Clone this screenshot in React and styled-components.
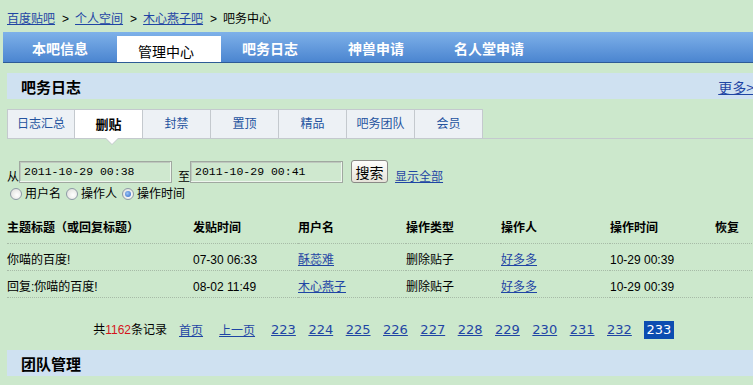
import React from 'react';
import styled, {createGlobalStyle, css} from 'styled-components';

const GlobalStyle = createGlobalStyle`
  html, body {
    margin: 0;
    padding: 0;
    background: #cce8cc;
    overflow: hidden;
  }
  body {
    font-family: "Liberation Sans", "Noto Sans CJK SC", sans-serif;
    font-size: 12px;
    color: #000;
  }
  a {
    color: #1f45a4;
    text-decoration: underline;
    cursor: pointer;
  }
`;

const navTabs = ['本吧信息', '管理中心', '吧务日志', '神兽申请', '名人堂申请'];
const subTabs = ['日志汇总', '删贴', '封禁', '置顶', '精品', '吧务团队', '会员'];
const columns = [
    {title: '主题标题（或回复标题）', width: 186},
    {title: '发贴时间', width: 105},
    {title: '用户名', width: 108},
    {title: '操作类型', width: 95},
    {title: '操作人', width: 109},
    {title: '操作时间', width: 105},
    {title: '恢复', width: 45},
];
const rows = [
    {title: '你喵的百度!', posted: '07-30 06:33', user: '酥蕊难', type: '删除贴子', operator: '好多多', time: '10-29 00:39'},
    {title: '回复:你喵的百度!', posted: '08-02 11:49', user: '木心燕子', type: '删除贴子', operator: '好多多', time: '10-29 00:39'},
];
const pages = [223, 224, 225, 226, 227, 228, 229, 230, 231, 232];

const App = () => {
    return (
        <Page>
            <GlobalStyle/>
            <Crumbs>
                <a>百度贴吧</a><Sep>&gt;</Sep>
                <a>个人空间</a><Sep>&gt;</Sep>
                <a>木心燕子吧</a><Sep>&gt;</Sep>
                <span>吧务中心</span>
            </Crumbs>

            <NavBar>
                {navTabs.map(tab => (
                    <NavTab key={tab} $active={tab === '管理中心'}>{tab}</NavTab>
                ))}
            </NavBar>

            <SectionHeader>
                <span>吧务日志</span>
                <More>更多&gt;</More>
            </SectionHeader>

            <SubTabs>
                {subTabs.map(tab => (
                    <SubTab key={tab} $active={tab === '删贴'}>{tab}</SubTab>
                ))}
            </SubTabs>

            <SearchRow>
                <Label>从</Label>
                <DateInput readOnly value="2011-10-29 00:38"/>
                <Label $gap={6}>至</Label>
                <DateInput readOnly value="2011-10-29 00:41"/>
                <SearchButton>搜索</SearchButton>
                <ShowAll>显示全部</ShowAll>
            </SearchRow>

            <Radios>
                <Option><Radio/>用户名</Option>
                <Option><Radio/>操作人</Option>
                <Option><Radio $checked/>操作时间</Option>
            </Radios>

            <LogTable>
                <colgroup>
                    {columns.map(col => <col key={col.title} style={{width: col.width}}/>)}
                </colgroup>
                <thead>
                <tr>
                    {columns.map(col => <th key={col.title}>{col.title}</th>)}
                </tr>
                </thead>
                <tbody>
                {rows.map(row => (
                    <tr key={row.title}>
                        <td>{row.title}</td>
                        <td>{row.posted}</td>
                        <td><a>{row.user}</a></td>
                        <td>{row.type}</td>
                        <td><a>{row.operator}</a></td>
                        <td>{row.time}</td>
                        <td></td>
                    </tr>
                ))}
                </tbody>
            </LogTable>

            <Pager>
                <Total>共<Count>1162</Count>条记录</Total>
                <PageLink $gap={12}>首页</PageLink>
                <PageLink $gap={16}>上一页</PageLink>
                {pages.map((num, i) => (
                    <PageNum key={num} $gap={i === 0 ? 16 : 12.5}>{num}</PageNum>
                ))}
                <CurrentPage>233</CurrentPage>
            </Pager>

            <SectionHeader $gap={11}>
                <span>团队管理</span>
            </SectionHeader>
        </Page>
    );
};

const Page = styled.div`
  width: 760px;
`;

const Crumbs = styled.div`
  padding: 12px 0 6px 7px;
  line-height: 14px;
  white-space: nowrap;
`;

const Sep = styled.span`
  margin: 0 6px 0 7px;
`;

const NavBar = styled.div`
  margin-left: 3px;
  height: 30px;
  padding-left: 4px;
  display: flex;
  align-items: flex-end;
  background: linear-gradient(#7eb1e9, #4b85d0);
  border-bottom: 1px solid #2d5b96;
`;

const NavTab = styled.div`
  height: 30px;
  line-height: 32px;
  padding: 0 25px;
  font-family: "Noto Sans CJK SC", sans-serif;
  font-size: 14px;
  font-weight: bold;
  color: #fff;
  white-space: nowrap;

  ${p => p.$active && css`
    height: 26px;
    line-height: 30px;
    margin: 0 -4px 0 4px;
    padding: 0 27px 0 21px;
    background: #fff;
    color: #000;
    font-weight: normal;
  `}
`;

const SectionHeader = styled.div`
  margin: ${p => p.$gap || 10}px 0 0 7px;
  height: 26px;
  padding: 0 6px 0 14px;
  display: flex;
  align-items: center;
  justify-content: space-between;
  background: #cfe1f1;
  font-family: "Noto Sans CJK SC", sans-serif;
  font-size: 15px;
  font-weight: bold;
`;

const More = styled.a`
  font-size: 14px;
  font-weight: normal;
  line-height: 16px;
  margin-top: 2px;
`;

const SubTabs = styled.div`
  margin: 10px 0 0 7px;
  display: flex;
  border-bottom: 1px solid #c4c9ce;
`;

const SubTab = styled.div`
  position: relative;
  box-sizing: border-box;
  width: 68px;
  height: 29px;
  line-height: 29px;
  text-align: center;
  background: #edf1f5;
  border-top: 1px solid #c4c9ce;
  border-right: 1px solid #c4c9ce;
  color: #24539f;

  &:first-child {
    border-left: 1px solid #c4c9ce;
  }

  ${p => p.$active && css`
    background: #fff;
    color: #000;
    font-size: 13px;
    font-weight: bold;

    &::before, &::after {
      content: "";
      position: absolute;
      left: 30px;
      top: 100%;
      border: 7px solid transparent;
      border-top-color: #c4c9ce;
      border-bottom: none;
    }

    &::after {
      left: 31px;
      border-width: 6px;
      border-bottom: none;
      border-top-color: #fff;
    }
  `}
`;

const SearchRow = styled.div`
  margin: 21px 0 0 7px;
  display: flex;
  align-items: flex-end;
  height: 23px;
`;

const Label = styled.span`
  margin-left: ${p => p.$gap || 0}px;
  font-family: "Noto Sans CJK SC", sans-serif;
  line-height: 14px;
`;

const DateInput = styled.input`
  box-sizing: border-box;
  width: 153px;
  height: 22px;
  margin: 0;
  padding: 0 0 1px 4px;
  border: 1px solid #a0a8a0;
  box-shadow: inset -1px -1px 0 #eef6ee, inset 1px 1px 0 #bfc8bf;
  background: #cfe8cf;
  font-family: "Liberation Mono", monospace;
  font-size: 11.5px;
  color: #000;
  outline: none;
`;

const SearchButton = styled.button`
  box-sizing: border-box;
  width: 37px;
  height: 23px;
  margin-left: 8px;
  padding: 0;
  border: 1px solid #8a8a86;
  border-radius: 3px;
  background: linear-gradient(#fdfdfb, #e6e3d9);
  font-family: "Noto Sans CJK SC", sans-serif;
  font-size: 14px;
  line-height: 20px;
  color: #000;
`;

const ShowAll = styled.a`
  margin-left: 7px;
  line-height: 14px;
  font-family: "Noto Sans CJK SC", sans-serif;
`;

const Radios = styled.div`
  margin: 4px 0 0 7px;
  height: 14px;
  display: flex;
  align-items: center;
  gap: 2px;
  line-height: 14px;
`;

const Option = styled.label`
  display: flex;
  align-items: center;
  gap: 3px;
  padding-left: 3px;
`;

const Radio = styled.span`
  position: relative;
  box-sizing: border-box;
  width: 12px;
  height: 12px;
  border: 1px solid #8e9aa6;
  border-radius: 50%;
  background: radial-gradient(circle at 60% 60%, #fff, #dcdcd8);

  ${p => p.$checked && css`
    &::after {
      content: "";
      position: absolute;
      left: 2px;
      top: 2px;
      width: 6px;
      height: 6px;
      border-radius: 50%;
      background: radial-gradient(circle at 40% 40%, #9cc4f5, #2b66c7);
    }
  `}
`;

const LogTable = styled.table`
  margin: 16px 0 0 7px;
  width: 753px;
  table-layout: fixed;
  border-collapse: collapse;
  font-size: 12px;

  th, td {
    padding: 0;
    text-align: left;
    line-height: 14px;
    white-space: nowrap;
    border-bottom: 1px dotted #a7bba7;
  }

  th {
    padding: 3px 0 9px;
    font-family: "Noto Sans CJK SC", sans-serif;
    font-weight: bold;
  }

  td {
    padding: 9px 0 3px;
  }
`;

const Pager = styled.div`
  margin: 23px 0 0 7px;
  height: 18px;
  display: flex;
  align-items: center;
  justify-content: center;
  line-height: 14px;
`;

const Total = styled.span`
  font-size: 12px;
`;

const Count = styled.span`
  color: #d4141b;
`;

const PageLink = styled.a`
  margin-left: ${p => p.$gap}px;
  font-family: "Noto Sans CJK SC", sans-serif;
  font-size: 12px;
`;

const PageNum = styled.a`
  margin-left: ${p => p.$gap}px;
  font-family: "DejaVu Sans", sans-serif;
  font-size: 13px;
`;

const CurrentPage = styled.span`
  margin-left: 12px;
  width: 30px;
  height: 18px;
  line-height: 18px;
  text-align: center;
  background: #0c4db1;
  color: #fff;
  font-family: "DejaVu Sans", sans-serif;
  font-size: 13px;
`;

export default App;
